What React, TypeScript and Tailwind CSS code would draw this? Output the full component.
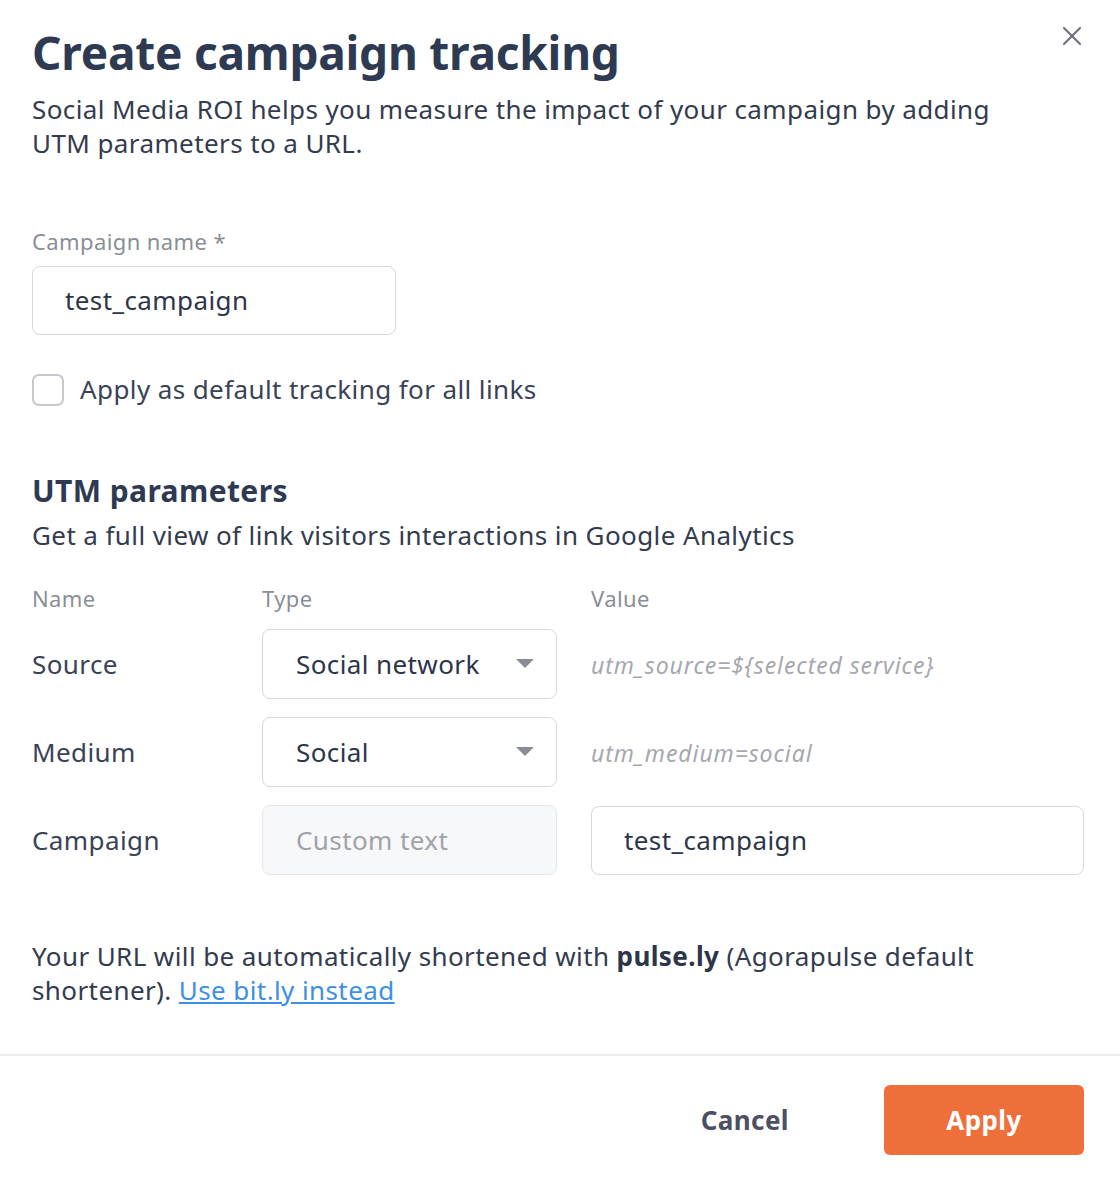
import { X } from 'lucide-react'

const font = { fontFamily: '"Noto Sans", Lato, sans-serif' }

function Caret() {
  return (
    <svg width="18" height="10" viewBox="0 0 18 10" className="shrink-0">
      <path d="M0 0 H18 L9 9 Z" fill="#8a8d94" />
    </svg>
  )
}

function SelectBox({ value }: { value: string }) {
  return (
    <div className="flex items-center justify-between h-[70px] w-[295px] border border-[#d5d7db] rounded-lg pl-[33px] pr-[22px] bg-white">
      <span className="text-[#2d3548]">{value}</span>
      <Caret />
    </div>
  )
}

function Row({ label, type, value }: { label: string; type: React.ReactNode; value: React.ReactNode }) {
  return (
    <div className="flex items-center h-[70px]">
      <span className="w-[230px] text-[#3a4256]">{label}</span>
      {type}
      <div className="ml-[34px] w-[493px]">{value}</div>
    </div>
  )
}

export default function App() {
  return (
    <div style={font} className="relative w-[1120px] h-[1188px] bg-white text-[#2d3548] tracking-[0.025em] overflow-hidden">
      <button className="absolute right-[32px] top-[20px] text-[#70737d]">
        <X size={32} strokeWidth={1.6} />
      </button>

      <div className="px-[32px] pt-[24px]">
        <h1 className="text-[46px] font-bold leading-[56px] tracking-[-0.005em] text-[#2d3a52]">Create campaign tracking</h1>
        <p className="mt-[12px] text-[26px] leading-[34px] text-[#333b4e] pr-[60px]">
          Social Media ROI helps you measure the impact of your campaign by adding UTM parameters to a URL.
        </p>

        <label className="block mt-[66px] text-[22px] leading-[30px] text-[#8a8e97]">Campaign name *</label>
        <div className="mt-[10px] w-[364px] h-[69px] border border-[#d5d7db] rounded-lg flex items-center px-[32px] text-[26px] text-[#2d3548]">
          test_campaign
        </div>

        <label className="mt-[35px] flex items-center gap-[16px]">
          <span className="w-[32px] h-[32px] rounded-[7px] border-2 border-[#c5c8cd] bg-white" />
          <span className="text-[26px] text-[#3a4256]">Apply as default tracking for all links</span>
        </label>

        <h2 className="mt-[64px] text-[30px] font-bold leading-[36px] text-[#2d3a52]">UTM parameters</h2>
        <p className="mt-[9px] text-[26px] leading-[34px] text-[#333b4e]">
          Get a full view of link visitors interactions in Google Analytics
        </p>

        <div className="mt-[31px] flex text-[22px] leading-[30px] text-[#8a8e97]">
          <span className="w-[230px]">Name</span>
          <span className="w-[329px]">Type</span>
          <span>Value</span>
        </div>

        <div className="mt-[16px] flex flex-col gap-[18px] text-[26px]">
          <Row
            label="Source"
            type={<SelectBox value="Social network" />}
            value={<span className="text-[23px] italic tracking-[0.04em] text-[#a5a8ae]">utm_source=${'{'}selected service{'}'}</span>}
          />
          <Row
            label="Medium"
            type={<SelectBox value="Social" />}
            value={<span className="text-[23px] italic tracking-[0.04em] text-[#a5a8ae]">utm_medium=social</span>}
          />
          <Row
            label="Campaign"
            type={
              <div className="h-[70px] w-[295px] border border-[#e3e5e8] rounded-lg bg-[#f7f8f9] flex items-center px-[33px] text-[#a0a3a9]">
                Custom text
              </div>
            }
            value={
              <div className="h-[69px] border border-[#d5d7db] rounded-lg flex items-center px-[32px] text-[#2d3548]">
                test_campaign
              </div>
            }
          />
        </div>

        <p className="mt-[64px] text-[26px] leading-[34px] text-[#333b4e] pr-[80px]">
          Your URL will be automatically shortened with <b className="font-bold text-[#2d3548]">pulse.ly</b> (Agorapulse default shortener).{' '}
          <a className="text-[#3d8fe3] underline">Use bit.ly instead</a>
        </p>
      </div>

      <div className="mt-[47px] border-t-2 border-[#ececee]" />

      <div className="flex items-center justify-end gap-[45px] pr-[36px] pt-[29px]">
        <button className="px-[50px] h-[70px] text-[26px] font-bold text-[#4a5162]">Cancel</button>
        <button className="w-[200px] h-[70px] rounded-md bg-[#ee6f3a] text-[26px] font-bold text-white">Apply</button>
      </div>
    </div>
  )
}
